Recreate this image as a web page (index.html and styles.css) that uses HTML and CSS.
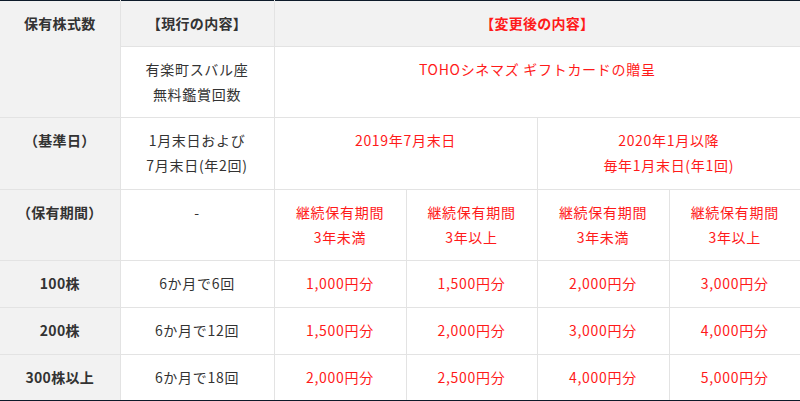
FILE: index.html
```html
<!DOCTYPE html>
<html lang="ja">
<head>
<meta charset="utf-8">
<link rel="stylesheet" href="styles.css">
</head>
<body>
<table class="plan">
  <colgroup>
    <col class="c1"><col class="c2"><col class="c3"><col class="c4"><col class="c5"><col class="c6">
  </colgroup>
  <tr class="r-head">
    <th class="side" rowspan="2">保有株式数</th>
    <th class="head">【現行の内容】</th>
    <th class="head red" colspan="4">【変更後の内容】</th>
  </tr>
  <tr class="r-two">
    <td>有楽町スバル座<br>無料鑑賞回数</td>
    <td class="red" colspan="4">TOHOシネマズ ギフトカードの贈呈</td>
  </tr>
  <tr class="r-two b">
    <th class="side">（基準日）</th>
    <td>1月末日および<br>7月末日(年2回)</td>
    <td class="red" colspan="2">2019年7月末日</td>
    <td class="red" colspan="2">2020年1月以降<br>毎年1月末日(年1回)</td>
  </tr>
  <tr class="r-two">
    <th class="side">（保有期間）</th>
    <td>-</td>
    <td class="red">継続保有期間<br>3年未満</td>
    <td class="red">継続保有期間<br>3年以上</td>
    <td class="red">継続保有期間<br>3年未満</td>
    <td class="red">継続保有期間<br>3年以上</td>
  </tr>
  <tr class="r-one b">
    <th class="side">100株</th>
    <td>6か月で6回</td>
    <td class="red">1,000円分</td>
    <td class="red">1,500円分</td>
    <td class="red">2,000円分</td>
    <td class="red">3,000円分</td>
  </tr>
  <tr class="r-one b">
    <th class="side">200株</th>
    <td>6か月で12回</td>
    <td class="red">1,500円分</td>
    <td class="red">2,000円分</td>
    <td class="red">3,000円分</td>
    <td class="red">4,000円分</td>
  </tr>
  <tr class="r-one last">
    <th class="side">300株以上</th>
    <td>6か月で18回</td>
    <td class="red">2,000円分</td>
    <td class="red">2,500円分</td>
    <td class="red">4,000円分</td>
    <td class="red">5,000円分</td>
  </tr>
</table>
</body>
</html>
```

FILE: styles.css
```css
html, body {
  margin: 0;
  padding: 0;
  background: #ffffff;
}
body {
  font-family: "Noto Sans CJK JP", "Noto Sans", sans-serif;
  font-size: 14px;
  color: #333333;
}
.plan {
  width: 800px;
  table-layout: fixed;
  border-collapse: collapse;
  border-top: 1px solid #0d1b2a;
  border-bottom: 1px solid #0d1b2a;
}
.c1 { width: 120px; }
.c2 { width: 154px; }
.c3 { width: 132px; }
.c4 { width: 131px; }
.c5 { width: 132px; }
.c6 { width: 131px; }
.plan th,
.plan td {
  border: 1px solid #e3e3e3;
  padding: 10px 4px;
  line-height: 25px;
  text-align: center;
  vertical-align: top;
  letter-spacing: 0.05em;
  font-weight: normal;
}
.plan tr:first-child th,
.plan tr:first-child td { border-top: 1px solid #0d1b2a; }
.plan tr.last th,
.plan tr.last td { border-bottom: 1px solid #0d1b2a; }
.plan th.side,
.plan th.head {
  background: #f2f2f2;
  font-weight: bold;
  letter-spacing: 0.02em;
}
.plan td:first-child, .plan th:first-child { border-left: none; }
.plan td:last-child, .plan th:last-child { border-right: none; }
.red { color: #ff1a1a; }
.plan .head.red { color: #ff1a1a; }
.r-head { height: 46px; }
.r-two { height: 71px; }
.r-two.b { height: 72px; }
.r-one { height: 46px; }
.r-one.b { height: 47px; }
```
